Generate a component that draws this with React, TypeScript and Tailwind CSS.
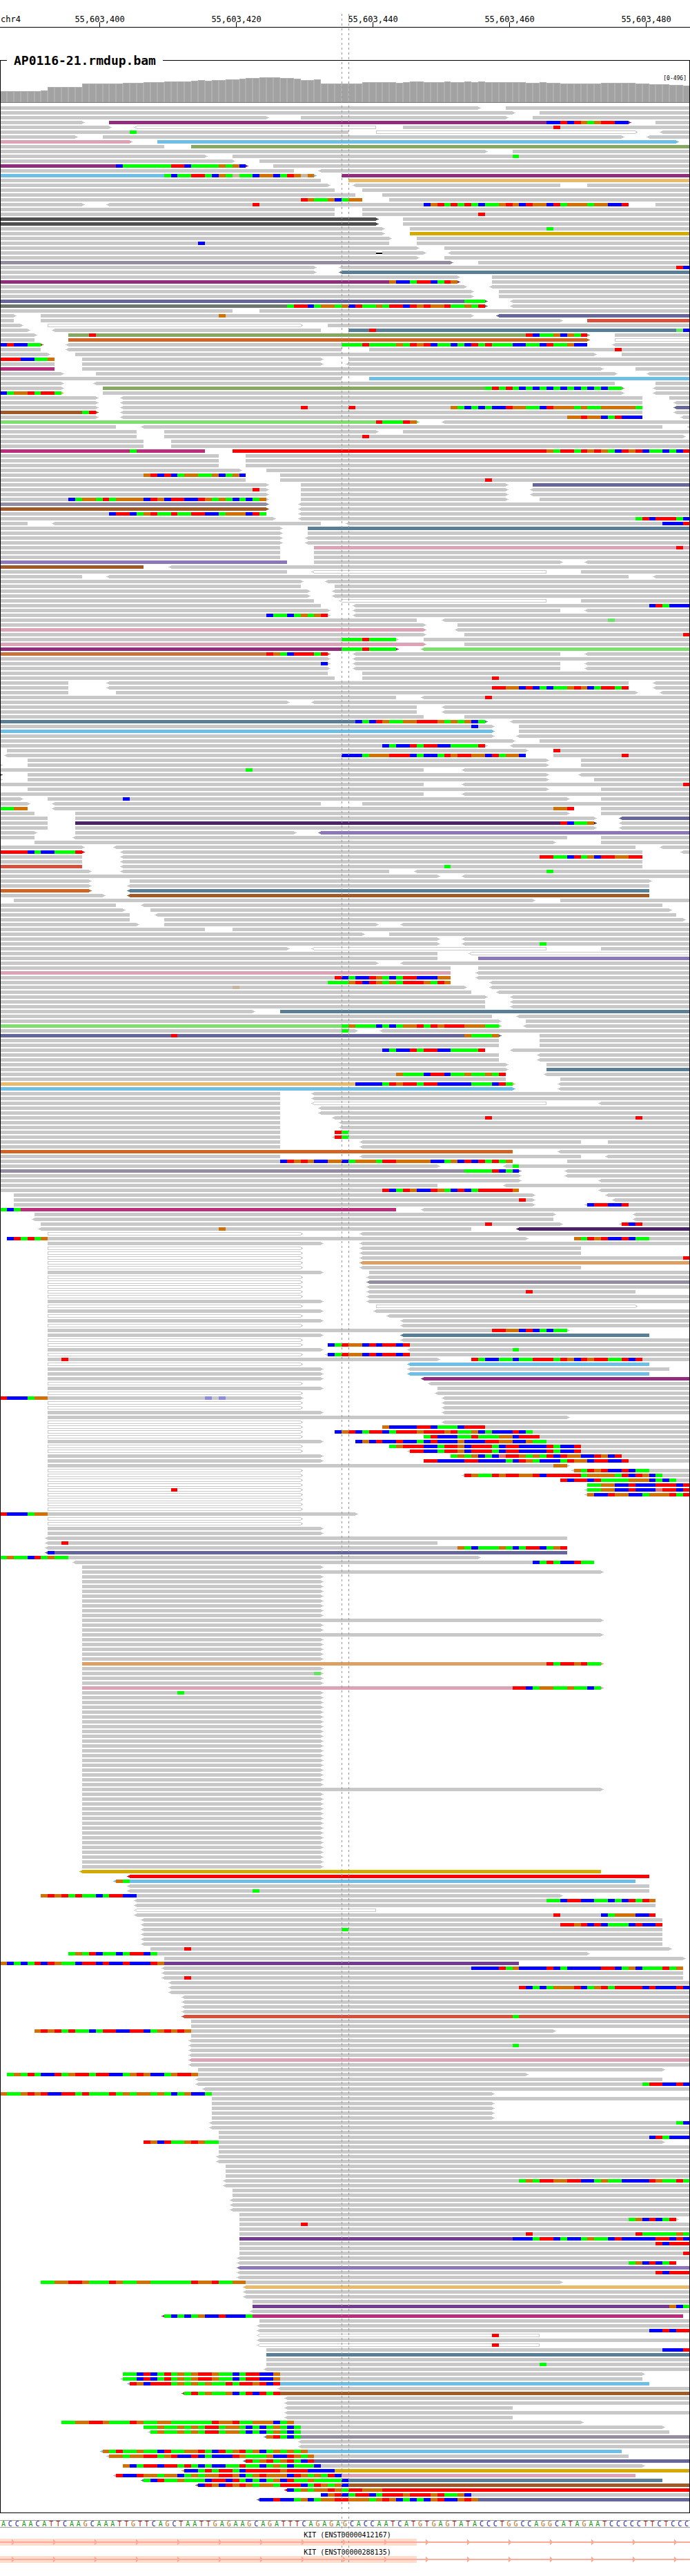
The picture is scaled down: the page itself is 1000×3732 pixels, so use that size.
const CELLS = 101;
const WIDTH = 1000;
const ROW = 7;
const edge = (cell: number) => Math.round((cell * WIDTH) / CELLS);

const READ_COLORS: Record<string, string> = {
  "": "#c8c8c8",
  open: "#c8c8c8",
  purple: "#912d7d",
  pink: "#dca3b6",
  sky: "#6ebee6",
  olive: "#87a861",
  sand: "#e8ba6e",
  charcoal: "#505050",
  gold: "#d4aa00",
  mauve: "#948ca0",
  slate: "#5a7e96",
  indigo: "#66669b",
  sage: "#6e786c",
  tomato: "#d8503a",
  rust: "#d06424",
  brown: "#a05a28",
  magenta: "#b92d7a",
  lime: "#80de70",
  red: "#ff0000",
  violet: "#8c78b8",
  copper: "#c8733c",
  plum: "#4b2369",
  peach: "#dca064",
  royal: "#733c91",
};

const BASE_COLORS: Record<string, string> = {
  g: "#00ff00",
  b: "#0000ff",
  r: "#ff0000",
  o: "#d17105",
  t: "#c8b49c",
  l: "#64e664",
  s: "#e07070",
  p: "#8c8cdc",
};

// One line per row of the pile-up. A read is [colour][<]start-end[>][:mismatches],
// an empty end runs to the right edge, and *n repeats the line n times.
const PILEUP = `
0-70> 74-
0-75> 79-
0-39> 44-74> 78-
0-12> purple16-92>:80bbrbrogorrbb 96-
0-16> open<20-55 59-:81r
0-51:19g open55-93> <97-
0-11> 15-91> <95-
pink0-19> sky23-99>
0-24 olive28-
0-71> 75-
0-30> 34-:75g
0-34> 38-
purple0-36>:17bgggggggrrbggggogob 40-
0-43 <47-
sky0-46>:24gbggrrgbogtggboobgroto purple50-
0-47 sand51-
0-48> <52-82 86-
0-49 53-
0-52 56-
0-53:44roggobgoo 57-
0-12> <16-92:37r,62borgrgrgbggorobroobrgooogoobbr 96-
0-49 53-
0-49 53-:70r
charcoal0-55> 59-
charcoal0-55> 59-
0-56> 60-:80g
0-56> gold60-
0-57> 61-
0-57:29b 61-
0-61> 65-
0-62>:55x <66-
0-61> 65-
mauve0-66> 70-
0-46> <50-:99rb
0-46> slate<50-
0-67> 72-
purple0-67>:57obbgrrbgro 72-
0-68> <72-
0-69> 73-
0-69> 73-
indigo0-71>:68ggg <75-
sage0-71>:42grrbgoogobrggogrrbroroorggogr <75-
0-34 38-
0-2> 6-69>:32o indigo<73-
0-2 6-82> tomato86-
0-3> open7-44> 48-
0-4> <8-47 slate51-:54r,99lb
0-5> olive10-86>:13r,77rbggobogr 90-
0-5 rust10-86> open90-
brown0-6>:0brbbgg <10-86:50gggrggggogrorbggbgbrgrgggbbggbrggobb <90-
0-6 <10-50 54-:90r
0-7> 11-87> 91-
0-8:0rrrbbggo 12-47> 51-
0-8 12-47> <51-
magenta0-8 12-88> 93-
0-9> 14-90> <95-
0-50 sky54-
0-9> <14-90 96-
0-9> olive15-91>:71grgrgbgbgbgbgbgbgbgg <96-
sand0-9>:0bgoorgrrg 15-91> <96-
0-14> <18-94 98-
0-14> <18-94 <99-
0-14> <18-94:44r,51r,66ogbgbgbbrooggbrooogoggooooog indigo<99-
brown0-14>:12gr <18-94 <99-
0-14> <18-94:83ooroobgrbbb <100-
lime0-61>:55rgggro <65-
0-17 <21-97 <101-
0-20 24-55> 59-
0-20 24-100>:53r
0-21 25-
0-21 25-
magenta0-30:19g red34-:80ogrrgrorogbrorbggbgbr
0-32 36- *3
0-35> 39-
0-36:21orbrbgooggobgob 41-
0-36 41-:71r
0-39> 44-74> indigo78-
0-39>:37r 44-74> <78-
0-39> 44-74> <78-
0-39>:10bgoogrgoooobrobrrbbrogogbgbgo 44-74> 79-
mauve0-39> <44-
brown0-39> <44-
0-39:16brrbgorggrggrrbbgooobrg <44-
0-40> <44-:93grbrrrgb
0-4 <8-47 <51-:97bbbr
0-41> slate45-
0-41> 45-
0-41> <45- *2
0-41 pink46-:99r
0-41 46- *2
violet0-42 46-82> <86-
brown0-21 <25-
0-42 open<46-80 85-
0-12 <16-92 <96-
0-44> <48-
0-44 49-
0-45> <49- *2
0-46 open<50-80 85-
0-47 <52-:95brgbbb
0-48> <52-82 <86-
0-48>:39bggbgogor <52-
0-61 <65-:89l
0-62> 67-
pink0-62> <67-
0-62> 68-:100r
0-58>:50gggrgggg 62-
pink0-62> 68-
purple0-58>:50gggrgggg lime<62-
copper0-48>:39rogbrrrgr <52-82 <86-
0-48> <52-
0-48>:47b <52-82 <86-
0-48> <52-82 <86-
0-48 53-
0-49 53-:72r
0-10 <16-92 <96-
0-10 <16-92:72rroobrbgbggorobgrrgr <96-
0-10 17-93> <97-
0-58 <62-:71r
0-42> <46-
0-61 <65- *2
0-62 68-
slate0-71>:52bgbroggoorrrogogobg <75-
0-72>:69b 76-
sky0-72> 76-
0-72> <76-
0-75> 79-
0-71>:56bgbbrgrrbbggggr <75-
1-77> 81-:81r
<1-77:50bbbgooorrrbgbbgrorroobrgoob 81-:91r
4-80> 85-
0-0> 4-80> 85-
0-62:36g <68-
charcoal0-0> 4-80> <85-
0-0> 4-80> 87-
0-62 <68-:100r
4-80> 88-
0-62 <68-
0-3> 7-83>:18b 88-
0-4> <8-47 53-
0-4:0ggoo <8-84:81oor 88-
0-5 11-83> 88-
0-7 11-87> indigo<91-
0-7 plum11-87>:82rbggo <91-
0-7 11-87> <91-
0-5> 11-43> violet<47-
0-5 <11-83 88-
5-81> 88-
0-12> <17-93 <97-
red0-12>:0rrrrbgbbgggr <18-94 <100-
0-12 <18-94:79rrggbrgobrroorr
0-12 <18-94
tomato0-12 <18-94:65g
0-13> <18-57 <61-:80g
0-64> <68-
0-13> 19-95>
0-13> <19-95
rust0-13> slate<19-95
0-15> brown<19-95
2-78> 82-
0-17 <21-97
0-18> 22-98>
0-19 <23-99
0-19 24-100>
0-20> 24-55> <59-
0-30 34-
0-53> 57-
0-64> <68-
0-64> <68-:79g
0-42> open<46-80 88-
0-64 open<69-
0-64 violet70-
0-55> <59-
0-66 70-
pink0-66 <70-
0-66:49rbgbbrogbgrrbbboo <70-
0-66:48gggorbrogogrrrogro <72-
0-68>:34t <72-
0-69 <73-
0-71> <75-
0-71 <75- *2
0-37> slate41-
0-72 <76-
0-73> 77-
lime0-73>:50gogggbgbgoorgrorrrooogg <77-
0-52>:50g <56-
indigo0-73>:25r,68ogggo 79-
0-73 79- *2
0-71:56bgbbrgrrbbggggr <75-
0-73 <79- *2
0-74> 80-
0-74> slate80-
0-74:58ogggbrrbggoggogr <80-
0-74 82-
sand0-75>:52bbbbgrorrgrrbbbbbgggbrg <82-
sky0-75> <82-
0-41 <46- *2
0-41 open<46-80 <88-
0-41 <47- *2
0-41 <49-:71r,93r
0-41 <50- *2
0-41 49-:49rg
0-41 <49-:49rg
0-41 <53-85 89-
0-41 <53-
rust0-75 <82-
0-41 <53-85 <89-
0-75:41brorobboobgooogrrooooobbgobrbrgrgo 83-
0-64> <74-:75g
mauve0-76>:68ggggrbgb <83-
0-76> <83-
0-76> <88-
0-64 <74-
0-76:56rbgrobbrogbrbgrrrrro <88-
2-78> <89-
2-78>:76r <90-
2-78> <86-:86brrbbr
magenta0-58:0gbg <62-
5-81> <93-
<5-81 <93-
6-82>:71r <91-:91rbr
<6-69:32o plum<76-
open7-44> <53-
1-77>:1brgrgo 84-:84ogrorbbrbgg
7-47> <53-
open7-44> <53-85 *2
open7-44> <53-:100r
open7-44> peach<53-
open7-44> <53-85
7-47> 54-
open7-44> <54-
open7-44> mauve<54-
open7-44> <54-
open7-44> <54-93:77r
open7-44> <54-
7-47> <54-
open7-44> open55-93>
7-47> <55-
open7-44> <57-
7-47> <59-
open7-44> <59-
7-83>:72rroobrbgbgg
7-47> slate<59-95
open7-44> <59-
open7-44> 48-:48bgroobrbrrbr
7-47> <60-:75g
open7-44> <48-:48bgroobrbrrbr
7-64>:9r 69-:69rgbbggbggrrrgrobrorrggrbr
open7-44> sky<60-95
7-47> <60-98
7-47> sky<60-95
7-47> purple<62-
open7-44> <63-
7-47> 64-
open7-44> <64-
0-44>:0rbbbgoo,30p,32p <65-
open7-44> <65- *2
7-47> <65-
7-83>
open7-44> <65-
open7-44> 56-:56obbbbrrbgggbrrr
open7-44> 49-:49borbgrrbgrrrorrrorggobgbbbrbg
open7-44> 62-:62grbbbggrgggoobrrr
7-47> 52-:52bobrbbrbbgbrbbbobbbrroobbogg
open7-44> 57-:57gorrrbbgrrobrrrgbrrbbbbrgbbr
open7-44> <60-:60rrbbgrrobrrrgbrrbbbbrgbbr
7-47> 66-:66gogobgbsrrogogrbroobbrobr
7-47> 62-:62rrbbbbrrbbbbgbrogbbbgroobrrbbr
7-83>:81oo
open7-44> <84-:84ogrorbbrbgg
open7-44> <68-:68roggrorroorbrrrrrgoooogrbrobg
open7-44> 82-:82rbrrbrggggooobgbg
open7-44> 86-:86ggoobbrbbbrrrbr
open7-44>:25r <86-:86ggoobbrbbbsrrbr
open7-44> <86-:86obbroobbgooorgr
open7-44> *3
0-52>:0rbbbgoo
open7-44> *2
7-47> *2
<7-83
<7-64:9r
<7-83:67ogbgggogbgrrbgor
indigo<7-83:7b
0-70>:0goggbrgogg
<11-87:78bgrgbbrgg
12-47>
12-88>
12-47> *9
12-88>
12-47> *2
12-88>
12-47> *5
peach12-88>:80rgrrorgg
12-47>
12-47>:46l
12-47> *2
pink12-88>:75rrbgooggoggbg
12-47>:26g
12-47> *19
12-88>
12-47> *16
gold<12-88
red<19-95
sky<17-93:17og
<19-95
<19-95:37g
6-82>:6ororgrggbgrrbb
<20-96:80ggbrrbbggbgbrgro
<20-96
open<20-55
<20-96:81r,88bgooobbr
<21-97
<21-97:82rrorbrbgggbrbbr
<21-97:50g
<21-97 *3
22-98>:27r
10-86>:10gogrbggbgrrbg
24-100>
royal0-76:0obgbgrbroggbrrbrbbrbbbro
<24-100:69bbbbrgobbbbrbgbbbbbrrbgobgggrgo
<24-100
<24-100:27r
<25-
<25-:76rbgbgooorbgorgrrrrbrbbbrb
<25-
<27- *4
tomato<27-:75g
28- *2
5-81>:5ororgrggbgrrbbrrbgororo
28-
<28-
<28-:75g
<28- *2
pink<28-
<28-
29-97>
1-77>:1gogrgbbrgorrgrrbbgorobbgorro
<29-97
<29-:94grrbbrb
<30-
0-72>:0oggororbbrrgrgggrgogoogogbgobbg
31-
31-72> *4
<31-:99gb
<31-
32-
32-:95brgbbb
21-97>:21robrggorogg
32- *2
<32- *2
33- *3
<33-:76gogrroorrbbgoggbbbbroggrg
<33-
34- *2
<34- *3
35-
35-99>:92gobrbgr
35-:44r
35-
35-:77r,93rgggggog
royal35-:75bbbgrrbgbbgoggbrbbbbbrrbrb
35-:96rbrrr
35-
35-:100r
<35-
<35-99:92gobrbgr
violet<35-
<35-:96rbrrr
<35-
6-82>:6ggoorrogggroggooggggggroorggoo
sand<36-
<36- *2
37-
royal37-:98obg
<37-
magenta<24-100:24gbgbgobbrbbbg
38-
<38-
<38-:95bbrbrr
open<38-79:72r
<38-
open<38-79:72r
39-:97bbbr
slate39-
39-
39-:79g
<39-
18-94>:18ggbrbgrgogorroggbgrrbbo
<18-94:18ggbrbgrgogorroggbgrrbbo
sky<19-95:19robrrrgogogoggrgrrorbr
<41-
brown<27-:27grgoggobgrbrgr
<42- *2
<42-75
<42-
<42-75
9-85>:9ggoorrogggroggooggggggroorggooobgo
21-97>:21ggoggogogrrgoogbgbgogbg
<22-98:22goggogogrrgoogbgbgogbg
mauve<39-:39orgbg
<44- *2
sky<15-91:15ogrggoggbrggoorgbrgorgobgogogo
<16-92:16oogoorrgorbbrbgbbbrogggobbrogo
indigo<36-:36rgorgorgbr
18-94>:18obgrrbrrgrgbgbbggrggbgogbgggb
gold<27-:27bbgrgrrgbrrrrrorrrbbbb
pink<17-93:17rbbroogoobgogoorrobgorooobrogogrb
slate<21-97:21gbrggogggbrrbrgbgbgobrggoggggb
brown<29-:29brobrorogoogrrrbgrogob
red<42-:42bgogoorogrrooo
47-:47borbgrrbgrrrorrrorggob
indigo<38-:38bbrbbgobgoorrooogorobgbgborbboro
`;

type Read = {
  color: string;
  open: boolean;
  left: boolean;
  right: boolean;
  start: number;
  end: number;
  bases: { at: number; length: number; base: string }[];
};

function parseRead(token: string): Read {
  const m = token.match(/^([a-z]*)(<?)(\d+)-(\d*)(>?)(?::(.*))?$/)!;
  const bases: Read["bases"] = [];
  for (const group of m[6] ? m[6].split(",") : []) {
    const g = group.match(/^(\d+)([a-z]+)$/)!;
    let at = Number(g[1]);
    for (const run of g[2].match(/(.)\1*/g) ?? []) {
      bases.push({ at, length: run.length, base: run[0] });
      at += run.length;
    }
  }
  return {
    color: READ_COLORS[m[1]],
    open: m[1] === "open",
    left: m[2] === "<",
    right: m[5] === ">",
    start: Number(m[3]),
    end: m[4] ? Number(m[4]) : CELLS,
    bases,
  };
}

const ROWS: Read[][] = PILEUP.trim()
  .split("\n")
  .flatMap((line) => {
    const [body, times] = line.split(" *");
    const row = body.split(" ").map(parseRead);
    return Array.from({ length: Number(times ?? 1) }, () => row);
  });

const COVERAGE: [number, number][] = [
  [6, 17], [1, 18], [5, 23], [6, 28], [3, 29], [3, 30], [4, 31], [1, 32], [1, 33], [1, 32],
  [2, 33], [2, 34], [1, 35], [2, 36], [3, 37], [2, 36], [1, 35], [2, 33], [1, 34], [6, 28],
  [5, 30], [1, 29], [1, 30], [2, 31], [3, 30], [1, 31], [2, 30], [1, 31], [1, 30], [1, 31],
  [6, 30], [2, 29], [1, 30], [2, 29], [6, 28], [5, 29], [2, 28], [3, 27], [2, 26], [1, 25],
];
const DEPTHS = COVERAGE.flatMap(([n, d]) => Array.from({ length: n }, () => d));

const SEQUENCE =
  "ACCAACATTCAAGCAAATTGTTCAGCTAATTGAGAAGCAGATTTCAGAGAG" +
  "CACCAATCATGTGAGTATACCCTGGCCAGGCATAGAATCCCCCTTCTCCC";

const LETTER_CLASS: Record<string, string> = {
  A: "text-[#1e961e]",
  C: "text-[#1e1e96]",
  G: "text-[#b46e1e]",
  T: "text-[#a01e1e]",
};

const TICKS = [
  { at: "14.45%", label: "55,603,400" },
  { at: "34.25%", label: "55,603,420" },
  { at: "54.05%", label: "55,603,440" },
  { at: "73.85%", label: "55,603,460" },
  { at: "93.65%", label: "55,603,480" },
];

function Ruler() {
  return (
    <svg className="block h-5 w-full overflow-visible text-xs" role="img" aria-label="Position on chr4">
      <text x="1" y="12">chr4</text>
      {TICKS.map((t) => (
        <g key={t.label}>
          <text x={t.at} y="12" textAnchor="middle">{t.label}</text>
          <line x1={t.at} x2={t.at} y1="12" y2="19" stroke="#000" shapeRendering="crispEdges" />
        </g>
      ))}
      <rect y="19" width="100%" height="1" />
    </svg>
  );
}

function Coverage() {
  return (
    <div className="relative">
      <svg
        className="block h-[50px] w-full"
        viewBox="0 0 1000 50"
        preserveAspectRatio="none"
        shapeRendering="crispEdges"
        role="img"
        aria-label="Coverage"
      >
        {DEPTHS.map((d, i) => {
          const x = edge(i);
          const w = edge(i + 1) - x;
          return (
            <g key={i}>
              <rect x={x} y={50 - d} width={w} height={d} fill="#b0b0b0" />
              <rect x={x + 1} y={51 - d} width={w - 2} height={d - 1} fill="#a2a2a2" />
            </g>
          );
        })}
        <rect y="49" width="1000" height="1" fill="#777" />
      </svg>
      <span className="absolute top-[10px] right-[5px] text-[8px] leading-[10px]">[0-496]</span>
    </div>
  );
}

function ReadShape({ read, y }: { read: Read; y: number }) {
  const a = edge(read.start);
  const b = edge(read.end);
  const { color, open, left, right } = read;
  return (
    <g fill={color}>
      {open ? (
        <>
          <rect x={a} y={y} width={b - a} height="1" />
          <rect x={a} y={y + 4} width={b - a} height="1" />
          {!left && <rect x={a} y={y} width="1" height="5" />}
          {!right && <rect x={b - 1} y={y} width="1" height="5" />}
          {left && <path d={`M${a - 2} ${y + 1}h2v1h-2zM${a - 2} ${y + 3}h2v1h-2zM${a - 4} ${y + 2}h2v1h-2z`} />}
          {right && <path d={`M${b} ${y + 1}h2v1h-2zM${b} ${y + 3}h2v1h-2zM${b + 1} ${y + 2}h2v1h-2z`} />}
        </>
      ) : (
        <>
          <rect x={a} y={y} width={b - a} height="5" />
          {left && <path d={`M${a} ${y + 1}h-2v1h-2v1h2v1h2z`} />}
          {right && <path d={`M${b} ${y + 1}h2v1h2v1h-2v1h-2z`} />}
        </>
      )}
      {read.bases.map(({ at, length, base }) => {
        const x = edge(at);
        const w = edge(at + length) - x;
        return base === "x" ? (
          <g key={at}>
            <rect x={x} y={y} width={w} height="5" fill="#fff" />
            <rect x={x} y={y + 2} width={w} height="2" fill="#000" />
          </g>
        ) : (
          <rect key={at} x={x} y={y} width={w} height="5" fill={BASE_COLORS[base]} />
        );
      })}
    </g>
  );
}

function Pileup() {
  const height = ROWS.length * ROW + 20;
  return (
    <svg
      className="block w-full"
      height={height}
      viewBox={`0 0 ${WIDTH} ${height}`}
      preserveAspectRatio="none"
      shapeRendering="crispEdges"
      role="img"
      aria-label="Aligned reads"
    >
      {ROWS.map((row, i) => row.map((read, j) => <ReadShape key={`${i}-${j}`} read={read} y={5 + i * ROW} />))}
    </svg>
  );
}

function SequenceTrack() {
  return (
    <div className="mt-[10px] grid h-[11px] grid-cols-[repeat(101,minmax(0,1fr))] border-y border-[#a0a0a0] text-center text-[10px] leading-[9px]">
      {SEQUENCE.split("").map((letter, i) => (
        <span key={i} className={LETTER_CLASS[letter]}>{letter}</span>
      ))}
    </div>
  );
}

const GENE_ARROWS = Array.from({ length: 17 }, (_, i) => 17 + i * 60);

function GeneTrack({ name }: { name: string }) {
  return (
    <div>
      <p className="pt-[5px] pl-[7px] text-center text-[10px] leading-[10px]">{name}</p>
      <svg
        className="block h-[10px] w-full"
        viewBox="0 0 1000 10"
        preserveAspectRatio="none"
        shapeRendering="crispEdges"
        role="img"
        aria-label={name}
      >
        <rect width={edge(61)} height="10" fill="#ffdccb" />
        <g fill="#ffaa99">
          <rect y="4" width="1000" height="2" />
          {GENE_ARROWS.map((x) => (
            <path key={x} d={`M${x} 1h1v1h1v1h1v4h-1v1h-1v1h-1z`} />
          ))}
        </g>
      </svg>
    </div>
  );
}

export default function App() {
  return (
    <main className="relative overflow-hidden bg-white pt-5 pb-[19px] font-['DejaVu_Sans_Mono',monospace] text-black">
      <Ruler />
      <section className="relative mt-9">
        <header className="flex h-[23px] items-center">
          <span className="h-px w-[10px] bg-black" />
          <h1 className="px-[10px] text-lg leading-[23px] font-bold">AP0116-21.rmdup.bam</h1>
          <span className="h-px flex-1 bg-black" />
        </header>
        <Coverage />
        <Pileup />
        <div className="pointer-events-none absolute inset-x-0 top-[11px] bottom-0 border border-t-0 border-black" />
      </section>
      <SequenceTrack />
      <div className="mt-px">
        <GeneTrack name="KIT (ENST00000412167)" />
        <GeneTrack name="KIT (ENST00000288135)" />
      </div>
      <svg
        className="pointer-events-none absolute top-5 left-0 h-[calc(100%-40px)] w-full"
        shapeRendering="crispEdges"
        aria-hidden="true"
      >
        <line x1="49.55%" x2="49.55%" y1="0" y2="100%" stroke="#969696" strokeDasharray="3 4" />
        <line x1="50.55%" x2="50.55%" y1="0" y2="100%" stroke="#969696" strokeDasharray="3 4" />
      </svg>
    </main>
  );
}
